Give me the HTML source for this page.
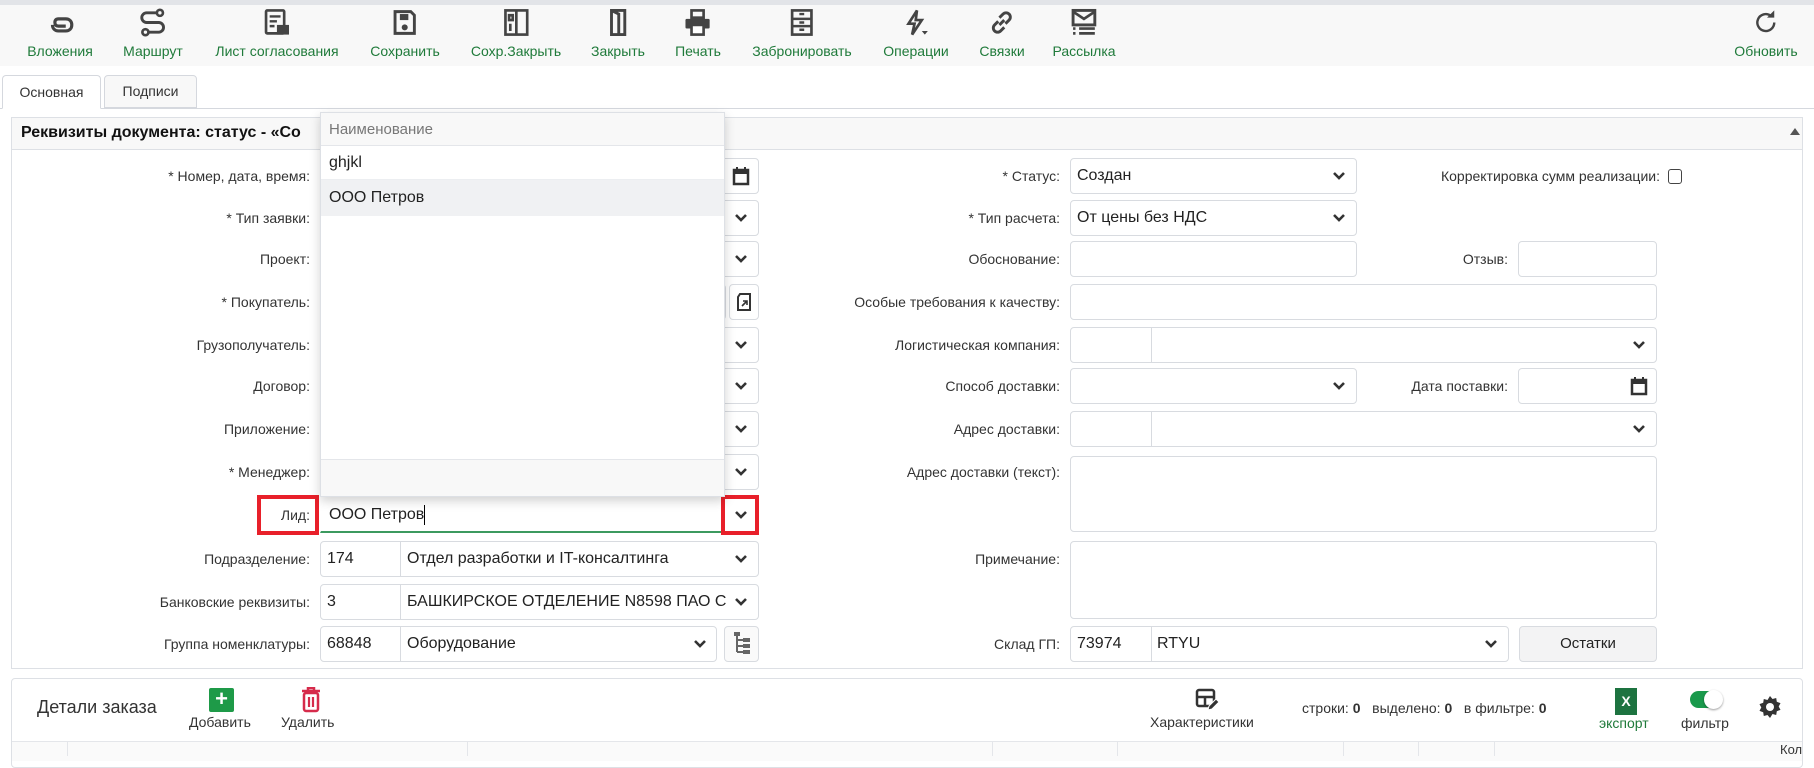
<!DOCTYPE html>
<html><head><meta charset="utf-8">
<style>
*{box-sizing:border-box;margin:0;padding:0}
body{width:1814px;height:755px;overflow:hidden;background:#fff;font-family:"Liberation Sans",sans-serif;color:#333;position:relative}
.a{position:absolute}
.tb{position:absolute;top:0;left:0;width:1814px;height:66px;background:#f8f8f8;border-top:5px solid #e2e4e8}
.ti{position:absolute;top:8px;text-align:center;transform:translateX(-50%);font-size:14px;color:#1f7a3a;white-space:nowrap}
.ti svg{display:block;margin:0 auto 6px;width:29px;height:29px}
.lbl{position:absolute;font-size:14px;color:#333;text-align:right;white-space:nowrap;line-height:16px}
.in{position:absolute;height:36px;border:1px solid #d8dbe0;border-radius:4px;background:#fff;font-size:16px;color:#222;line-height:34px;padding-left:6px;white-space:nowrap;overflow:hidden}
.chev{position:absolute;width:14px;height:10px}
</style></head><body>

<div class="tb"></div>
<div class="ti" style="left:60px"><svg viewBox="0 0 24 24"><path d="M6 14c0 3 2 5 5 5h6c3 0 5-2 5-5s-2-5-5-5h-6c-2 0-3 1-3 3s1 3 3 3h6" fill="none" stroke="#444" stroke-width="2.6"/></svg>Вложения</div>
<div class="ti" style="left:153px"><svg viewBox="0 0 24 24"><circle cx="18" cy="4" r="2.5" fill="none" stroke="#444" stroke-width="2.2"/><circle cx="6" cy="20" r="2.5" fill="none" stroke="#444" stroke-width="2.2"/><path d="M15 4H7a4 4 0 0 0 0 8h10a4 4 0 0 1 0 8H9" fill="none" stroke="#444" stroke-width="2.4"/></svg>Маршрут</div>
<div class="ti" style="left:277px"><svg viewBox="0 0 24 24"><rect x="3" y="2" width="15" height="19" rx="1" fill="none" stroke="#444" stroke-width="2.2"/><path d="M6 7h9M6 11h6M6 15h4" stroke="#444" stroke-width="2"/><rect x="12" y="14" width="10" height="8" fill="#444"/></svg>Лист согласования</div>
<div class="ti" style="left:405px"><svg viewBox="0 0 24 24"><path d="M4 3h13l3 3v15H4z" fill="none" stroke="#444" stroke-width="2.4"/><rect x="8" y="5" width="7" height="5" fill="#444"/><circle cx="12" cy="16" r="2.5" fill="#444"/></svg>Сохранить</div>
<div class="ti" style="left:516px"><svg viewBox="0 0 24 24"><rect x="3" y="2" width="18" height="20" fill="none" stroke="#444" stroke-width="2.2"/><path d="M12 2v20M6 6h3v4H6zM7 13v6" stroke="#444" stroke-width="2.2" fill="none"/></svg>Сохр.Закрыть</div>
<div class="ti" style="left:618px"><svg viewBox="0 0 24 24"><path d="M7 2h11v20H7zM7 2l6 3v17" fill="none" stroke="#444" stroke-width="2.4"/></svg>Закрыть</div>
<div class="ti" style="left:698px"><svg viewBox="0 0 24 24"><rect x="7" y="2" width="10" height="6" fill="none" stroke="#444" stroke-width="2.2"/><rect x="2" y="9" width="20" height="8" rx="1" fill="#444"/><rect x="7" y="14" width="10" height="8" fill="#fff" stroke="#444" stroke-width="2.2"/></svg>Печать</div>
<div class="ti" style="left:802px"><svg viewBox="0 0 24 24"><rect x="4" y="2" width="16" height="20" fill="none" stroke="#444" stroke-width="2.2"/><path d="M4 9h16M4 15h16M10 5h4M10 12h4M10 18h4" stroke="#444" stroke-width="2"/></svg>Забронировать</div>
<div class="ti" style="left:916px"><svg viewBox="0 0 24 24"><path d="M13 2L6 13h5l-2 9 8-12h-5z" fill="none" stroke="#444" stroke-width="2.2"/><path d="M17 19h5l-2.5 3z" fill="#444"/></svg>Операции</div>
<div class="ti" style="left:1002px"><svg viewBox="0 0 24 24"><path d="M10 14l4-4M9 11l-3 3a3.5 3.5 0 0 0 5 5l3-3M15 13l3-3a3.5 3.5 0 0 0-5-5l-3 3" fill="none" stroke="#444" stroke-width="2.4"/></svg>Связки</div>
<div class="ti" style="left:1084px"><svg viewBox="0 0 24 24"><rect x="3" y="2" width="18" height="12" fill="none" stroke="#444" stroke-width="2.4"/><path d="M3 3l9 6 9-6" fill="none" stroke="#444" stroke-width="2.2"/><path d="M3 17h2M8 17h13M3 21h2M8 21h13" stroke="#444" stroke-width="2.2"/></svg>Рассылка</div>
<div class="ti" style="left:1766px"><svg viewBox="0 0 24 24"><path d="M19 12a7 7 0 1 1-3-5.7" fill="none" stroke="#444" stroke-width="2"/><path d="M19 2v6h-6z" fill="#444"/></svg>Обновить</div>

<div class="a" style="left:0;top:108px;width:1814px;height:1px;background:#d5d8de"></div>
<div class="a" style="left:2px;top:75px;width:99px;height:34px;border:1px solid #d5d8de;border-bottom:1px solid #fff;border-radius:4px 4px 0 0;background:#fff;font-size:14px;line-height:32px;text-align:center">Основная</div>
<div class="a" style="left:104px;top:75px;width:93px;height:33px;border:1px solid #d5d8de;border-radius:4px 4px 0 0;background:#f8f8f8;font-size:14px;line-height:30px;text-align:center">Подписи</div>

<div class="a" style="left:11px;top:117px;width:1792px;height:552px;border:1px solid #dde0e5"></div>
<div class="a" style="left:12px;top:118px;width:1790px;height:32px;background:#f8f8f8;border-bottom:1px solid #dde0e5"></div>
<div class="a" style="left:21px;top:124px;font-size:16px;font-weight:bold;color:#111">Реквизиты документа: статус - «Со</div>
<div class="a" style="left:1790px;top:128px;width:0;height:0;border-left:5px solid transparent;border-right:5px solid transparent;border-bottom:7px solid #555"></div>

<div class="lbl" style="right:1504px;top:168px">* Номер, дата, время:</div>
<div class="lbl" style="right:1504px;top:210px">* Тип заявки:</div>
<div class="lbl" style="right:1504px;top:251px">Проект:</div>
<div class="lbl" style="right:1504px;top:294px">* Покупатель:</div>
<div class="lbl" style="right:1504px;top:337px">Грузополучатель:</div>
<div class="lbl" style="right:1504px;top:378px">Договор:</div>
<div class="lbl" style="right:1504px;top:421px">Приложение:</div>
<div class="lbl" style="right:1504px;top:464px">* Менеджер:</div>
<div class="lbl" style="right:1504px;top:507px">Лид:</div>
<div class="lbl" style="right:1504px;top:551px">Подразделение:</div>
<div class="lbl" style="right:1504px;top:594px">Банковские реквизиты:</div>
<div class="lbl" style="right:1504px;top:636px">Группа номенклатуры:</div>

<div class="in" style="left:320px;top:158px;width:439px"></div>
<svg class="a" style="left:732px;top:166px" width="18" height="20" viewBox="0 0 18 20"><rect x="2" y="4" width="14" height="14" fill="none" stroke="#333" stroke-width="2.5"/><rect x="2" y="4" width="14" height="4" fill="#333"/><path d="M5 1v4M13 1v4" stroke="#333" stroke-width="2"/></svg>
<div class="in" style="left:320px;top:200px;width:439px"></div>
<div class="in" style="left:320px;top:241px;width:439px"></div>
<div class="in" style="left:320px;top:284px;width:406px"></div>
<div class="in" style="left:729px;top:284px;width:30px"></div>
<svg class="a" style="left:735px;top:292px" width="18" height="20" viewBox="0 0 18 20"><path d="M5 2h10v16H3V5z" fill="none" stroke="#333" stroke-width="2"/><path d="M7 14l5-5M8 9h4v4" fill="none" stroke="#333" stroke-width="1.6"/></svg>
<div class="in" style="left:320px;top:327px;width:439px"></div>
<div class="in" style="left:320px;top:368px;width:439px"></div>
<div class="in" style="left:320px;top:411px;width:439px"></div>
<div class="in" style="left:320px;top:454px;width:439px"></div>
<svg class="chev" style="left:734px;top:213px" viewBox="0 0 14 10"><path d="M2 2l5 5 5-5" fill="none" stroke="#333" stroke-width="2.6"/></svg>
<svg class="chev" style="left:734px;top:254px" viewBox="0 0 14 10"><path d="M2 2l5 5 5-5" fill="none" stroke="#333" stroke-width="2.6"/></svg>
<svg class="chev" style="left:734px;top:340px" viewBox="0 0 14 10"><path d="M2 2l5 5 5-5" fill="none" stroke="#333" stroke-width="2.6"/></svg>
<svg class="chev" style="left:734px;top:381px" viewBox="0 0 14 10"><path d="M2 2l5 5 5-5" fill="none" stroke="#333" stroke-width="2.6"/></svg>
<svg class="chev" style="left:734px;top:424px" viewBox="0 0 14 10"><path d="M2 2l5 5 5-5" fill="none" stroke="#333" stroke-width="2.6"/></svg>
<svg class="chev" style="left:734px;top:467px" viewBox="0 0 14 10"><path d="M2 2l5 5 5-5" fill="none" stroke="#333" stroke-width="2.6"/></svg>

<div class="in" style="left:320px;top:497px;width:439px;border-color:#fff;border-bottom:2px solid #3c9a5f;border-radius:0;padding-left:8px">ООО Петров<span style="display:inline-block;width:1px;height:20px;background:#000;vertical-align:middle"></span></div>
<svg class="chev" style="left:734px;top:510px" viewBox="0 0 14 10"><path d="M2 2l5 5 5-5" fill="none" stroke="#333" stroke-width="2.6"/></svg>
<div class="a" style="left:257px;top:495px;width:62px;height:40px;border:4px solid #e8202a"></div>
<div class="a" style="left:721px;top:495px;width:38px;height:40px;border:4px solid #e8202a"></div>

<div class="a" style="left:320px;top:112px;width:405px;height:385px;background:#fff;border:1px solid #dde0e5;box-shadow:0 4px 10px rgba(0,0,0,.18)">
 <div style="height:33px;background:#f8f8f8;border-bottom:1px solid #e4e6ea;font-size:15px;color:#777;line-height:34px;padding-left:8px">Наименование</div>
 <div style="height:34px;font-size:16px;line-height:34px;padding-left:8px;color:#222;border-bottom:1px solid #eceef1">ghjkl</div>
 <div style="height:36px;font-size:16px;line-height:36px;padding-left:8px;color:#222;background:#f0f1f3">ООО Петров</div>
 <div style="position:absolute;left:0;right:0;bottom:0;height:37px;background:#f8f8f8;border-top:1px solid #e4e6ea"></div>
</div>

<div class="in" style="left:320px;top:541px;width:439px">174</div><div class="a" style="left:400px;top:541px;height:36px;width:1px;background:#d8dbe0"></div>
<div class="a" style="left:407px;top:541px;font-size:16px;line-height:36px;color:#222">Отдел разработки и IT-консалтинга</div>
<svg class="chev" style="left:734px;top:554px" viewBox="0 0 14 10"><path d="M2 2l5 5 5-5" fill="none" stroke="#333" stroke-width="2.6"/></svg>
<div class="in" style="left:320px;top:584px;width:439px">3</div><div class="a" style="left:400px;top:584px;height:36px;width:1px;background:#d8dbe0"></div>
<div class="a" style="left:407px;top:584px;width:320px;overflow:hidden;white-space:nowrap;font-size:16px;line-height:36px;color:#222">БАШКИРСКОЕ ОТДЕЛЕНИЕ N8598 ПАО СБЕРБАНК</div>
<svg class="chev" style="left:734px;top:597px" viewBox="0 0 14 10"><path d="M2 2l5 5 5-5" fill="none" stroke="#333" stroke-width="2.6"/></svg>
<div class="in" style="left:320px;top:626px;width:397px">68848</div><div class="a" style="left:400px;top:626px;height:36px;width:1px;background:#d8dbe0"></div>
<div class="a" style="left:407px;top:626px;font-size:16px;line-height:36px;color:#222">Оборудование</div>
<svg class="chev" style="left:693px;top:639px" viewBox="0 0 14 10"><path d="M2 2l5 5 5-5" fill="none" stroke="#333" stroke-width="2.6"/></svg>
<div class="in" style="left:724px;top:626px;width:35px;background:#fafafa"></div>
<svg class="a" style="left:733px;top:632px" width="18" height="24" viewBox="0 0 18 24"><path d="M4 2v18M4 8h6M4 14h6M4 20h6" stroke="#666" stroke-width="2"/><rect x="1" y="0" width="6" height="4" fill="#666"/><rect x="10" y="6" width="7" height="4" fill="#666"/><rect x="10" y="12" width="7" height="4" fill="#666"/><rect x="10" y="18" width="7" height="4" fill="#666"/></svg>

<div class="lbl" style="right:754px;top:168px">* Статус:</div>
<div class="lbl" style="right:754px;top:210px">* Тип расчета:</div>
<div class="lbl" style="right:754px;top:251px">Обоснование:</div>
<div class="lbl" style="right:754px;top:294px">Особые требования к качеству:</div>
<div class="lbl" style="right:754px;top:337px">Логистическая компания:</div>
<div class="lbl" style="right:754px;top:378px">Способ доставки:</div>
<div class="lbl" style="right:754px;top:421px">Адрес доставки:</div>
<div class="lbl" style="right:754px;top:464px">Адрес доставки (текст):</div>
<div class="lbl" style="right:754px;top:551px">Примечание:</div>
<div class="lbl" style="right:754px;top:636px">Склад ГП:</div>
<div class="lbl" style="right:154px;top:168px">Корректировка сумм реализации:</div>
<div class="a" style="left:1668px;top:169px;width:14px;height:15px;border:1.5px solid #444;border-radius:3px"></div>
<div class="lbl" style="right:306px;top:251px">Отзыв:</div>
<div class="lbl" style="right:306px;top:378px">Дата поставки:</div>

<div class="in" style="left:1070px;top:158px;width:287px">Создан</div>
<svg class="chev" style="left:1332px;top:171px" viewBox="0 0 14 10"><path d="M2 2l5 5 5-5" fill="none" stroke="#333" stroke-width="2.6"/></svg>
<div class="in" style="left:1070px;top:200px;width:287px">От цены без НДС</div>
<svg class="chev" style="left:1332px;top:213px" viewBox="0 0 14 10"><path d="M2 2l5 5 5-5" fill="none" stroke="#333" stroke-width="2.6"/></svg>
<div class="in" style="left:1070px;top:241px;width:287px"></div>
<div class="in" style="left:1518px;top:241px;width:139px"></div>
<div class="in" style="left:1070px;top:284px;width:587px"></div>
<div class="in" style="left:1070px;top:327px;width:587px"></div><div class="a" style="left:1151px;top:327px;width:1px;height:36px;background:#d8dbe0"></div>
<svg class="chev" style="left:1632px;top:340px" viewBox="0 0 14 10"><path d="M2 2l5 5 5-5" fill="none" stroke="#333" stroke-width="2.6"/></svg>
<div class="in" style="left:1070px;top:368px;width:287px"></div>
<svg class="chev" style="left:1332px;top:381px" viewBox="0 0 14 10"><path d="M2 2l5 5 5-5" fill="none" stroke="#333" stroke-width="2.6"/></svg>
<div class="in" style="left:1518px;top:368px;width:139px"></div>
<svg class="a" style="left:1630px;top:376px" width="18" height="20" viewBox="0 0 18 20"><rect x="2" y="4" width="14" height="14" fill="none" stroke="#333" stroke-width="2.5"/><rect x="2" y="4" width="14" height="4" fill="#333"/><path d="M5 1v4M13 1v4" stroke="#333" stroke-width="2"/></svg>
<div class="in" style="left:1070px;top:411px;width:587px"></div><div class="a" style="left:1151px;top:411px;width:1px;height:36px;background:#d8dbe0"></div>
<svg class="chev" style="left:1632px;top:424px" viewBox="0 0 14 10"><path d="M2 2l5 5 5-5" fill="none" stroke="#333" stroke-width="2.6"/></svg>
<div class="in" style="left:1070px;top:456px;width:587px;height:76px"></div>
<div class="in" style="left:1070px;top:541px;width:587px;height:78px"></div>
<div class="in" style="left:1070px;top:626px;width:439px">73974</div><div class="a" style="left:1151px;top:626px;width:1px;height:36px;background:#d8dbe0"></div>
<div class="a" style="left:1157px;top:626px;font-size:16px;line-height:36px;color:#222">RTYU</div>
<svg class="chev" style="left:1484px;top:639px" viewBox="0 0 14 10"><path d="M2 2l5 5 5-5" fill="none" stroke="#333" stroke-width="2.6"/></svg>
<div class="in" style="left:1519px;top:626px;width:138px;background:#f3f3f4;text-align:center;padding:0;font-size:15px">Остатки</div>

<div class="a" style="left:11px;top:678px;width:1792px;height:90px;border:1px solid #dde0e5;border-radius:4px"></div>
<div class="a" style="left:12px;top:741px;width:1790px;height:20px;background:#fafafa;border-top:1px solid #e4e6ea"></div>
<div class="a" style="left:67px;top:742px;width:1px;height:14px;background:#e4e6ea"></div>
<div class="a" style="left:467px;top:742px;width:1px;height:14px;background:#e4e6ea"></div>
<div class="a" style="left:992px;top:742px;width:1px;height:14px;background:#e4e6ea"></div>
<div class="a" style="left:1117px;top:742px;width:1px;height:14px;background:#e4e6ea"></div>
<div class="a" style="left:1343px;top:742px;width:1px;height:14px;background:#e4e6ea"></div>
<div class="a" style="left:1418px;top:742px;width:1px;height:14px;background:#e4e6ea"></div>
<div class="a" style="left:1494px;top:742px;width:1px;height:14px;background:#e4e6ea"></div>
<div class="a" style="left:1780px;top:742px;font-size:13px;color:#333">Кол</div>
<div class="a" style="left:37px;top:697px;font-size:18px;color:#333">Детали заказа</div>
<div class="a" style="left:209px;top:688px;width:25px;height:24px;background:#1e9a48;border-radius:2px;color:#fff;font-size:22px;line-height:22px;text-align:center;font-weight:bold">+</div>
<div class="a" style="left:189px;top:714px;font-size:14px">Добавить</div>
<svg class="a" style="left:300px;top:687px" width="22" height="26" viewBox="0 0 22 26"><path d="M2 4h18M8 4V1h6v3" stroke="#d62b4b" stroke-width="2.5" fill="none"/><rect x="4" y="6" width="14" height="18" rx="2" fill="none" stroke="#d62b4b" stroke-width="2.5"/><path d="M9 10v10M13 10v10" stroke="#d62b4b" stroke-width="2.2"/></svg>
<div class="a" style="left:281px;top:714px;font-size:14px">Удалить</div>
<svg class="a" style="left:1195px;top:688px" width="24" height="24" viewBox="0 0 24 24"><rect x="2" y="2" width="17" height="16" rx="2" fill="none" stroke="#333" stroke-width="2.5"/><path d="M2 9h17M10 9v9" stroke="#333" stroke-width="2.5"/><path d="M13 22l1-4 7-7 3 3-7 7z" fill="#333" stroke="#fff" stroke-width="1"/></svg>
<div class="a" style="left:1150px;top:714px;font-size:14px">Характеристики</div>
<div class="a" style="left:1302px;top:700px;font-size:14px">строки: <b>0</b>&nbsp;&nbsp; выделено: <b>0</b>&nbsp;&nbsp; в фильтре: <b>0</b></div>
<div class="a" style="left:1615px;top:688px;width:22px;height:27px;background:#1d7340;color:#fff;font-size:14px;font-weight:bold;line-height:27px;text-align:center">X</div>
<div class="a" style="left:1599px;top:715px;font-size:14px;color:#1f7a3a">экспорт</div>
<div class="a" style="left:1690px;top:691px;width:30px;height:17px;border-radius:9px;background:#1a9a4c"></div>
<div class="a" style="left:1704px;top:690px;width:19px;height:19px;border-radius:50%;background:#fff;box-shadow:0 1px 2px rgba(0,0,0,.4)"></div>
<div class="a" style="left:1681px;top:715px;font-size:14px">фильтр</div>
<svg class="a" style="left:1758px;top:695px" width="24" height="24" viewBox="0 0 24 24"><path d="M12 1l2.5 3 3.7-1 .6 3.8 3.7 1.3-1.8 3.4 1.8 3.4-3.7 1.3-.6 3.8-3.7-1L12 23l-2.5-3-3.7 1-.6-3.8L1.5 15.9l1.8-3.4-1.8-3.4 3.7-1.3.6-3.8 3.7 1z" fill="#333"/><circle cx="12" cy="12" r="4" fill="#fff"/></svg>
</body></html>
